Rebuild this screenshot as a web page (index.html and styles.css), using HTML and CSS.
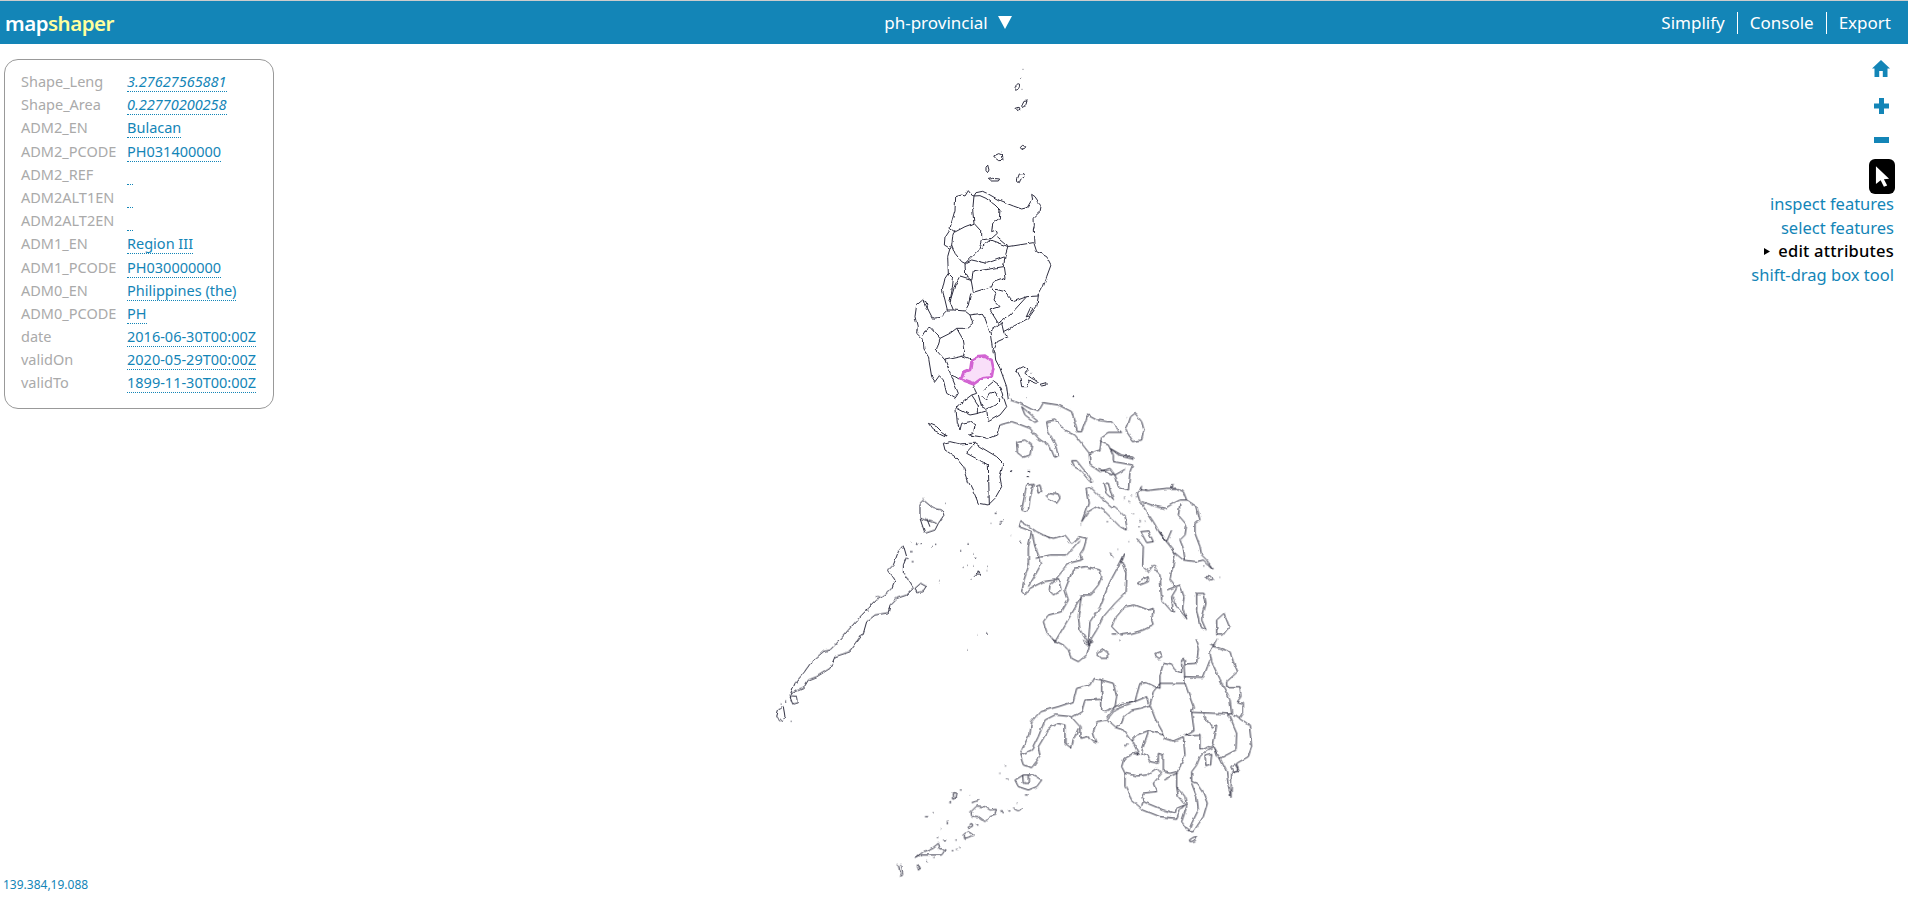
FILE: index.html
```html
<!DOCTYPE html>
<html lang="en">
<head>
<meta charset="utf-8">
<title>mapshaper</title>
<link rel="stylesheet" href="styles.css">
</head>
<body>
<header class="topbar">
  <div class="logo">map<span class="logo-accent">shaper</span></div>
  <div class="layer-name"><span>ph-provincial</span><svg class="caret" viewBox="0 0 14 13"><path d="M0 0H14L7 13Z"/></svg></div>
  <nav class="nav">
    <span class="nav-item">Simplify</span>
    <span class="nav-item">Console</span>
    <span class="nav-item">Export</span>
  </nav>
</header>
<main class="stage">
  <svg class="map" viewBox="0 44 1908 857" width="1908" height="857">
    <defs>
      <filter id="wiggle" filterUnits="userSpaceOnUse" x="0" y="44" width="1908" height="857" color-interpolation-filters="sRGB">
        <feTurbulence type="fractalNoise" baseFrequency="0.13" numOctaves="2" seed="4" result="noise"/>
        <feDisplacementMap in="SourceGraphic" in2="noise" scale="3.5" xChannelSelector="R" yChannelSelector="G"/>
      </filter>
    </defs>
    <g class="coastline">
    <g transform="translate(900 60) scale(.33333)">
      <path d="M368 28h2M363 55h2M365 88h2M304 276h1"/>
      <path d="M345 90C343 80 352 68 358 72C360 82 354 92 345 90ZM345 145L355 142L358 150L352 154ZM365 138L372 124L381 123L378 133L368 143ZM361 262L368 256L377 260L372 270L364 267ZM281 288L296 281L307 285L309 301L296 302L287 295ZM258 322L263 315L267 330L263 338L258 332ZM265 358L280 355L299 357L295 363L272 363ZM353 355L358 342L372 341L375 350L362 358L358 368L352 364Z"/>
      <path d="M150 505L158 475L165 450L167 410L185 405L195 408L205 392L215 405L222 408L228 398L248 394L265 402L300 422L340 438L365 447L385 442L398 420L395 403L405 410L415 425L424 435L420 455L402 472L403 500L400 510"/>
      <path d="M222 408L218 450L222 490M150 505L165 516L195 500L222 490L240 510M222 408L240 407L258 415L285 435L300 450L298 475L278 490L275 515L288 510"/>
    </g>
    <g transform="translate(910 230) scale(.33333)">
      <path d="M118 0L105 20L103 45L120 55L113 80L115 130L105 145L97 180L105 210L112 240L90 262L68 265L55 240L48 215L38 210L20 225L15 260L22 290L20 310L40 330L42 360"/>
      <path d="M135 0L128 20L125 45L135 70L155 95L165 100L205 60L215 30L215 0M125 45L120 55M205 60L240 30L295 50L370 38M215 30L245 25L262 10L258 0M262 20L295 48L285 80L230 100L185 90L165 100L167 135L185 148L190 125L280 110L285 145L250 157L245 170L190 187L183 148L150 138L135 165L120 215L130 240L165 243L175 225L183 190M115 130L130 145L127 175L120 215M285 80L280 110M130 240L112 240M165 243L180 255L188 280L170 295L140 295L120 310L90 325L60 292L50 295L38 315M180 255L215 250L225 265L240 305L248 360M240 305L268 285L275 280L282 310L295 320L262 335L252 360M90 325L80 360M140 295L160 330L165 360M245 170L258 190L252 210L270 230L240 240L265 280L300 255L350 200L385 198L380 230L355 265L280 305"/>
      <path d="M370 0L372 40L380 65L410 80L423 105L410 140L400 170L385 198M350 200L310 215L285 185L258 178M348 262L362 232L368 240L358 255ZM40 213L50 240M20 300h3"/>
    </g>
    <g transform="translate(900 290) scale(.33333)">
      <path d="M72 180L85 200L95 260L105 275L118 257L130 270L140 310L165 325L175 310L155 260L135 210M108 180L135 210L190 198L195 180M190 198L215 208M155 255L180 270"/>
      <path d="M278 180L280 190M282 180L285 190L287 210L300 235L320 290L325 330"/>
      <path d="M220 283L225 300L230 310L215 315L175 345L168 355L172 400L180 420L185 400L210 395L225 405L220 430L208 435L240 440L265 445L290 435L300 405"/>
      <path d="M235 315L245 350L260 358L285 345L300 330L285 305L270 310L260 330L245 315M260 360L265 395L300 375L320 350L300 290L280 275L250 300M215 315L235 345L235 370L210 375L172 355M235 370L262 362"/>
      <path d="M350 240L370 230L385 240L375 250L395 265L415 275L410 280L385 270L380 290L365 290L360 260ZM420 283L438 278L438 285L425 288ZM130 460L150 455L180 462L205 460L225 460L240 470L290 500L310 520L300 560L305 590L285 625L265 645L235 640L225 615L205 575L190 530L165 500L135 480ZM85 400L110 410L125 425L145 438L130 435L100 420ZM330 544h5M383 542h6M380 560h6M380 323h2M518 320h6M395 250h2"/>
      <path d="M225 462L200 490L265 525L268 645"/>
      <path class="selected" d="M215 208L235 198L255 197L275 210L280 235L275 262L245 265L220 283L190 272L183 268L190 248L210 240Z"/>
    </g>
    <g transform="translate(1000 400) scale(.33333)">
      <path d="M0 75L35 65L50 70L90 85L115 115L150 140L165 175L175 170L165 130L145 95L140 65L165 60L195 90L225 105L268 160L300 150L305 110L325 97L365 97L345 80L335 65L320 65L290 60L262 45L258 60L245 95L232 95L225 70L215 35L175 15L130 8L115 35L95 28L60 10L30 0"/>
      <path d="M65 20L100 50L115 62L105 67L75 45ZM378 92L392 50L405 40L425 65L432 90L425 120L400 125ZM330 145L365 165L400 172L402 178L360 168ZM215 182L230 182L248 205L265 225L278 245L270 245L240 210L222 200ZM50 125L75 120L95 135L90 165L70 172L52 158Z"/>
      <path d="M268 160L270 195L300 215L330 205L345 225L355 260L385 270L390 215L398 195L370 190L340 185L340 165L325 135L300 125M295 205L345 225L375 208"/>
      <path d="M412 280L425 265L440 272L500 265L530 265L550 275L560 300L590 320L600 360L585 370L585 400L600 440L605 465L620 480L640 508L610 480L590 485L550 480L520 455L515 445L480 400L460 365L420 305ZM425 305L470 320L495 325L520 310L540 300L560 300M540 310L535 345L560 375L555 405L540 420L550 445L555 480M425 255L420 270L440 270M520 252L515 268L530 268"/>
      <path d="M410 415L430 440L428 500L445 515L460 495L480 525L485 600L520 640L515 590L530 565L510 540L525 465L515 445M500 570L540 555L552 590L548 625L560 655L530 620L520 590M422 395L445 393L460 425L440 428ZM480 395L500 425L515 390"/>
      <path d="M55 380L60 362L85 378L110 395L130 405L160 415L195 405L215 430L240 410L260 415L250 450L240 465L245 480L205 490L190 510L165 540L130 545L90 565L75 585L65 575L72 540L85 500L85 440L95 395L70 385ZM95 395L105 440L125 490L100 535L85 560M107 475L150 465L200 465L240 420M150 555L175 535L183 570L160 585L148 570Z"/>
      <path d="M130 665L145 645L185 635L205 600L195 570L220 505L260 500L300 510L305 530L295 555L270 585L245 585L235 650L240 690L268 735M130 665L140 695L165 725M165 725L245 590"/>
      <path d="M265 730L270 665L300 620L330 545L360 490L375 460L365 485L378 520L375 580L345 610L310 650L290 690ZM335 680L345 655L375 620L405 615L445 630L460 625L455 660L460 675L430 690L395 700L360 705ZM65 330L80 255L100 253L90 295L85 330L75 333ZM110 258L120 255L125 275L115 280ZM138 290L150 278L175 282L180 295L170 310L150 300ZM258 265L275 265L300 290L335 320L345 320L375 350L382 390L360 380L335 355L310 330L290 320L265 335L245 365L265 310ZM310 250L325 250L340 300L318 280ZM412 550L425 540L445 530L445 545L420 555ZM615 530L630 530L638 540L628 543ZM590 580L612 580L618 610L605 660L618 690L600 680L590 630ZM650 660L672 640L688 680L670 705L650 705Z"/>
      <path d="M33 213h4M85 212h5M82 232h5M378 50h2M372 295h5M385 307h3M395 285h3M408 290h3M398 340h5M418 362h4M435 363h3M418 380h4M242 372h2M320 365h4M30 407h2M62 428h4M385 422h2M352 448h2M610 498h3M658 532h2M586 578h3"/>
      <path d="M135 405L150 415M478 395L495 420M330 458L340 470M0 365h8M335 702h14M355 718h4"/>
    </g>
    <g transform="translate(760 480) scale(.33333)">
      <path d="M90 645L105 610L130 580L155 545L190 515L210 510L235 485L265 450L305 405L325 385L350 360L375 345L395 325L405 300L395 285L385 270L400 255L415 215L430 195L440 230L430 255L430 280L445 300L460 325L440 345L410 355L390 375L385 398L345 405L320 425L310 460L270 515L240 525L225 530L210 565L170 590L145 600L130 625L95 640Z"/>
      <path d="M90 650L110 652L112 668L98 672ZM55 690L70 680L75 710L65 725L50 710ZM480 70L490 60L520 85L545 90L552 105L535 130L525 150L495 160L480 115ZM480 115L530 130M500 115L510 140M465 325L482 310L500 320L490 335L470 338ZM645 285L655 272L660 285Z"/>
      <path d="M555 70h2M488 55h2M480 190h6M465 190h8M450 188h2M525 193h4M516 200h3M600 212h4M622 192h5M640 222h2M642 235h5M622 256h2M608 262h3M640 258h2M682 262h2M680 272h2M633 296h2M540 302h2M538 308h1M650 462h2M678 462h6M622 510h2M92 724h3M62 672h3M75 663h4M782 187h3M750 168h2M692 130h2M704 100h6M730 118h2M718 132h8M350 350h8M320 390h6M385 385h3M450 215h8M455 245h6M440 235h6M445 298h4"/>
    </g>
    <g transform="translate(1000 640) scale(.33333)">
      <path d="M160 0L190 15L205 30L215 55L235 65L260 45L270 10L275 0M250 0L260 15L280 5M290 42L310 28L325 40L325 55L305 55ZM465 40L480 35L488 50L480 60L468 52Z"/>
      <path d="M585 0L595 25L590 70L555 72L552 58L545 60L545 100L525 90L515 75L490 70L480 105L480 145L465 140L440 128L420 130L410 165L405 185L370 190L345 200L320 232"/>
      <path d="M630 40L650 0M630 15L660 25L690 35L700 65L713 95L680 125L680 140L720 140L723 170L712 185L730 190L730 220L720 235L748 255L755 320L745 350L710 370L715 390L695 395L693 470L685 440L680 395L660 355L640 320L620 330L600 350L590 375L575 395L575 425L590 430L610 460L622 490L610 530L580 575L565 575L545 545L560 500L555 470L540 450L530 440L530 400"/>
      <path d="M552 110L610 112L630 60M555 130L480 130L460 155L450 195L465 235L490 280L495 295L520 303L550 290L555 345L540 380L530 400L520 405L490 420M552 72L555 130L580 200L575 217L695 222L690 180L660 120L635 65L630 40M575 217L582 270L565 280L555 285L600 283L600 330L640 315L650 255L635 265L615 230L613 220M685 222L710 280L708 330L660 355M640 320L650 350M695 222L720 232M575 430L590 470L595 510L575 550L565 575"/>
      <path d="M615 345L635 340L632 375L618 380ZM568 600L580 592L590 590L585 603L570 605ZM692 380L705 372L715 390L700 395Z"/>
      <path d="M530 440L535 470L555 495L530 505L525 520L490 510L430 485L425 460L470 455L460 430L485 400L470 385L440 405L410 408L375 400L375 440L395 480L430 510L480 530L530 535L540 510L555 495M430 485L425 495M375 400L365 380L372 355L400 340L418 345L395 300L410 285L445 272L490 285M445 275L428 325L425 340L440 345L450 365L475 370L475 340L490 345L490 395L510 400L530 395M418 345L405 335"/>
      <path d="M450 195L420 205L395 210L370 230L365 250L345 262L320 240L345 210L380 195L440 170L445 190M345 262L370 270L395 305"/>
      <path d="M320 240L290 245L280 275L290 310L270 300L265 290L240 295L240 260L215 232L245 215L255 180L305 178L305 120L280 115L270 135L230 145L220 185L175 200L120 215L95 245L90 280L65 330L60 345L70 375L95 383L120 350L115 320L130 295L150 260L170 250L195 255L195 310L215 325L220 300L235 265M305 120L340 130L350 170L345 200L320 215L305 212L305 178M215 230L165 225L135 240L115 290L95 330L60 345"/>
      <path d="M45 420L70 405L100 405L125 420L110 440L85 450L55 440ZM68 405L70 430L85 430L85 405M375 320L382 310"/>
    </g>
    <g transform="translate(890 760) scale(.33333)">
      <path d="M243 155L260 138L285 140L300 150L322 148L318 165L300 170L285 185L265 170L245 168ZM230 200L245 190L248 198L235 205ZM222 225L235 215L250 225L235 232L225 235ZM75 295L100 275L130 262L145 250L150 265L165 270L155 285L125 285L95 285ZM187 100L198 97L195 115L188 118ZM82 312L92 325L85 330ZM25 315L32 345M35 315L38 345L30 350M370 142C380 155 390 155 398 145M245 128L265 122"/>
      <path d="M258 195h10M175 128h8M210 90h5M237 104h3M105 170h10M128 158h3M172 185v8M152 208h2M140 232h5M160 240h8M198 238v4M185 272h5M198 268h4M208 265h4M112 300v4M130 295h4M348 58h8M325 40h3M345 18h3M335 150L340 160M355 150h6M380 130h4M405 105h8"/>
    </g>
    </g>
  </svg>

  <aside class="popup">
    <div class="row"><span class="key">Shape_Leng</span><span class="val num">3.27627565881</span></div>
    <div class="row"><span class="key">Shape_Area</span><span class="val num">0.22770200258</span></div>
    <div class="row"><span class="key">ADM2_EN</span><span class="val">Bulacan</span></div>
    <div class="row"><span class="key">ADM2_PCODE</span><span class="val">PH031400000</span></div>
    <div class="row"><span class="key">ADM2_REF</span><span class="val empty"></span></div>
    <div class="row"><span class="key">ADM2ALT1EN</span><span class="val empty"></span></div>
    <div class="row"><span class="key">ADM2ALT2EN</span><span class="val empty"></span></div>
    <div class="row"><span class="key">ADM1_EN</span><span class="val">Region III</span></div>
    <div class="row"><span class="key">ADM1_PCODE</span><span class="val">PH030000000</span></div>
    <div class="row"><span class="key">ADM0_EN</span><span class="val">Philippines (the)</span></div>
    <div class="row"><span class="key">ADM0_PCODE</span><span class="val">PH</span></div>
    <div class="row"><span class="key">date</span><span class="val">2016-06-30T00:00Z</span></div>
    <div class="row"><span class="key">validOn</span><span class="val">2020-05-29T00:00Z</span></div>
    <div class="row"><span class="key">validTo</span><span class="val">1899-11-30T00:00Z</span></div>
  </aside>

  <div class="tools">
    <svg class="tool-icon icon-home" viewBox="0 0 18 17"><path d="M9 0L18 8.500H15.500V17H10.800V11H7.200V17H2.500V8.500H0Z"/></svg>
    <svg class="tool-icon icon-plus" viewBox="0 0 15 16"><path d="M5 0H10V5.500H15V10.500H10V16H5V10.500H0V5.500H5Z"/></svg>
    <svg class="tool-icon icon-minus" viewBox="0 0 15 6"><path d="M0 0H15V6H0Z"/></svg>
    <div class="pointer-btn"><svg class="pointer" viewBox="0 0 16 22"><path d="M1 0L15 13.500L9.500 14L13 20.500L9.500 22L6 15L1 19Z"/></svg></div>
    <div class="tool-menu">
      <div class="tool-link">inspect features</div>
      <div class="tool-link">select features</div>
      <div class="tool-link active"><svg class="marker" viewBox="0 0 6 7"><path d="M0 0L6 3.500L0 7Z"/></svg>edit attributes</div>
      <div class="tool-link">shift-drag box tool</div>
    </div>
  </div>

  <div class="coords">139.384,19.088</div>
</main>
</body>
</html>
```
FILE: styles.css
```css
* { box-sizing: border-box; }
html, body { margin: 0; height: 100%; overflow: hidden; background: #fff; }
body { font-family: "Noto Sans", "Liberation Sans", sans-serif; display: flex; flex-direction: column; }

.topbar {
  height: 44px;
  border-top: 1px solid #ccc;
  background: #1385b7;
  color: #fff;
  display: grid;
  grid-template-columns: 1fr auto 1fr;
  align-items: center;
  padding: 0 17px 0 5px;
  flex: none;
}
.logo { font-size: 20.5px; font-weight: 600; letter-spacing: -0.5px; }
.logo-accent { color: #ffff9e; }
.layer-name { font-size: 17px; display: flex; align-items: center; gap: 10px; }
.caret { width: 14px; height: 13px; fill: #fff; }
.nav { justify-self: end; display: flex; font-size: 17px; }
.nav-item { padding: 0 12px; border-left: 1px solid #fff; line-height: 22px; }
.nav-item:first-child { border-left: 0; }
.nav-item:last-child { padding-right: 0; }

.stage { position: relative; flex: 1; }
.map { position: absolute; left: 0; top: 0; fill: none; stroke: #2e2e40; stroke-width: 1px; stroke-linejoin: round; }
.map path { vector-effect: non-scaling-stroke; }
.map .selected { fill: #f9dff9; stroke: #d264d2; stroke-width: 2.6px; }
.coastline { filter: url(#wiggle); }

.popup {
  position: absolute;
  left: 4px;
  top: 15px;
  width: 270px;
  height: 350px;
  border: 1px solid #999;
  border-radius: 14px;
  background: #fff;
  padding: 11px 0 0 16px;
  font-size: 14.5px;
}
.row { display: grid; grid-template-columns: 106px auto; height: 23.2px; line-height: 21px; }
.key { color: #aaa; white-space: nowrap; }
.val { color: #1385b7; border-bottom: 1px dotted #1385b7; justify-self: start; white-space: nowrap; height: 21px; }
.val.num { font-style: italic; }
.val.empty { width: 6px; }

.tools {
  position: absolute;
  right: 14px;
  top: 16px;
  display: flex;
  flex-direction: column;
  align-items: flex-end;
}
.tool-icon { fill: #1385b7; display: block; margin-right: 4px; }
.icon-home { width: 18px; height: 17px; margin-bottom: 21px; }
.icon-plus { width: 15px; height: 16px; margin-right: 5px; margin-bottom: 23px; }
.icon-minus { width: 15px; height: 6px; margin-right: 5px; margin-bottom: 16px; }
.pointer-btn {
  width: 26px;
  height: 35px;
  background: #000;
  border-radius: 6px;
  display: flex;
  align-items: center;
  justify-content: center;
  margin-right: -1px;
}
.pointer { width: 15px; height: 21px; fill: #fff; }
.tool-menu { font-size: 16.5px; text-align: right; line-height: 23.6px; margin-top: -2px; }
.tool-link { color: #1385b7; }
.tool-link.active { color: #000; font-weight: 500; letter-spacing: 0.2px; }
.marker { width: 6px; height: 7px; fill: #000; margin-right: 8px; vertical-align: 2px; }

.coords { position: absolute; left: 3px; bottom: 8px; font-size: 12px; color: #1385b7; }
```
